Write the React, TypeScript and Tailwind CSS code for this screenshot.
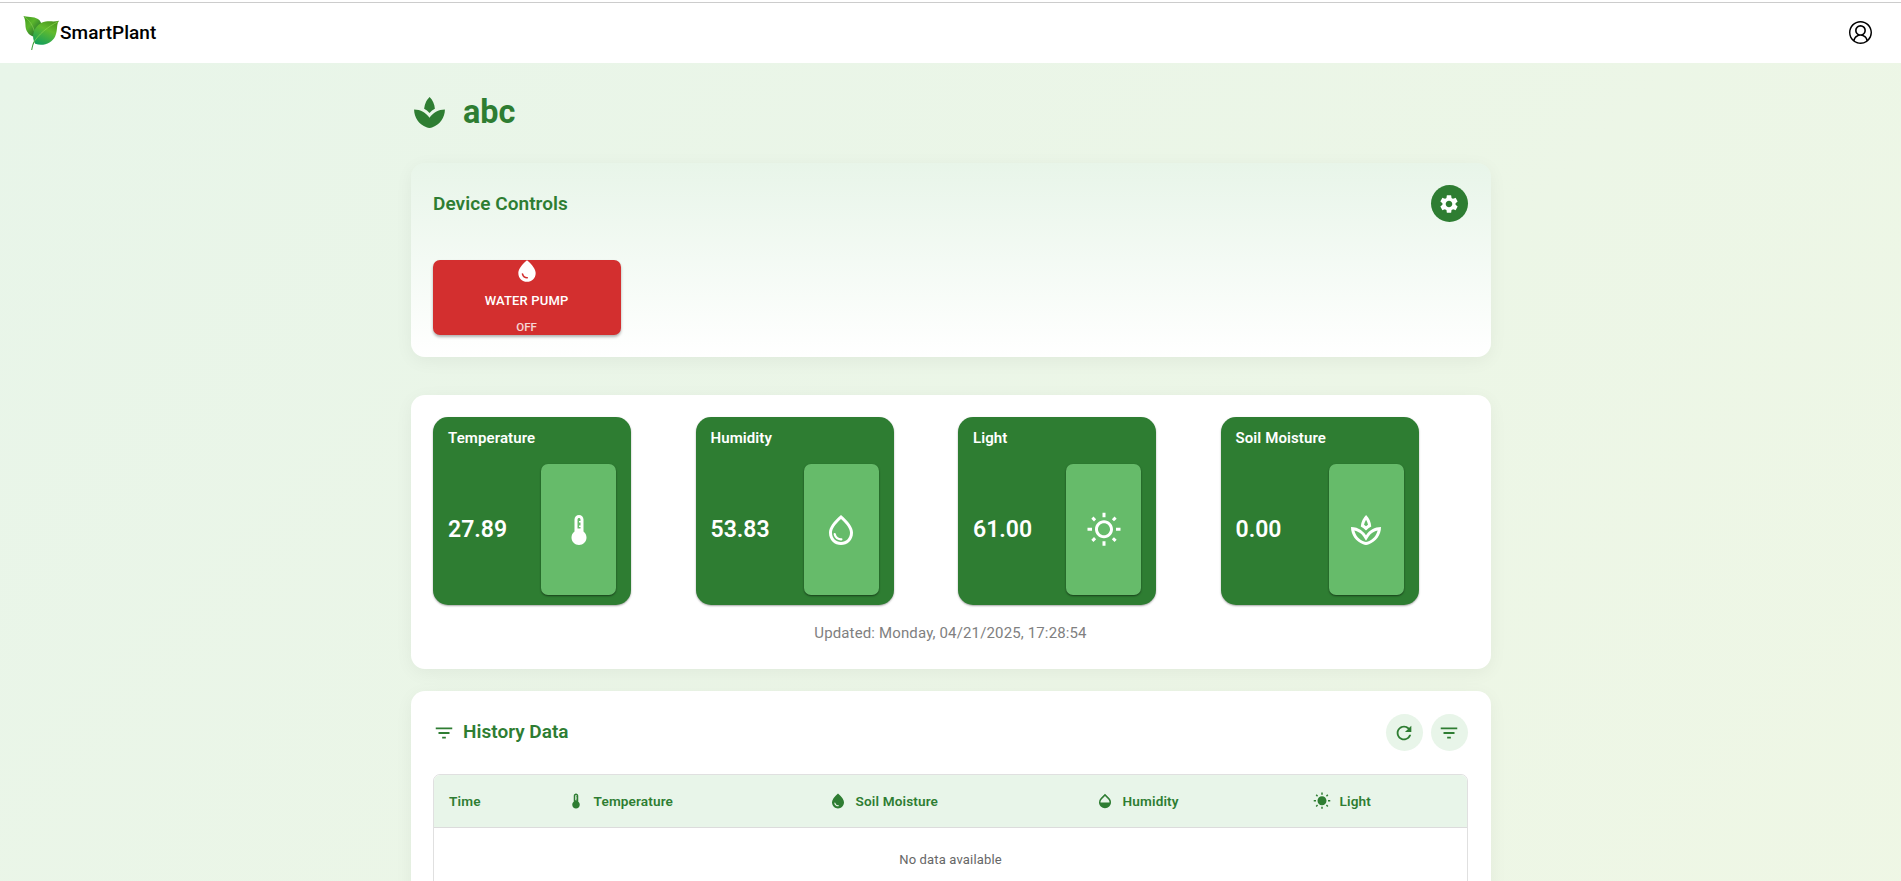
import React from "react";
import type { IconType } from "react-icons";
import {
  MdFilterList,
  MdOpacity,
  MdOutlineSpa,
  MdOutlineWaterDrop,
  MdOutlineWbSunny,
  MdRefresh,
  MdSettings,
  MdSpa,
  MdThermostat,
  MdWaterDrop,
  MdWbSunny,
} from "react-icons/md";
import { VscAccount } from "react-icons/vsc";

const sensors: { label: string; value: string; icon: IconType }[] = [
  { label: "Temperature", value: "27.89", icon: MdThermostat },
  { label: "Humidity", value: "53.83", icon: MdOutlineWaterDrop },
  { label: "Light", value: "61.00", icon: MdOutlineWbSunny },
  { label: "Soil Moisture", value: "0.00", icon: MdOutlineSpa },
];

const columns: { label: string; width: string; icon?: IconType }[] = [
  { label: "Time", width: "w-[118px]" },
  { label: "Temperature", width: "w-[262px]", icon: MdThermostat },
  { label: "Soil Moisture", width: "w-[267px]", icon: MdWaterDrop },
  { label: "Humidity", width: "w-[217px]", icon: MdOpacity },
  { label: "Light", width: "", icon: MdWbSunny },
];

function Logo() {
  return (
    <svg viewBox="0 0 38 36" className="h-[36px] w-[37px]">
      <defs>
        <linearGradient id="leafBack" x1="0" y1="0" x2="1" y2="1">
          <stop offset="0" stopColor="#3f9a1c" />
          <stop offset="0.4" stopColor="#5bb52c" />
          <stop offset="0.75" stopColor="#2a7a2c" />
          <stop offset="1" stopColor="#1d6a34" />
        </linearGradient>
        <linearGradient id="leafFront" x1="0.8" y1="0" x2="0.3" y2="1">
          <stop offset="0" stopColor="#4a941c" />
          <stop offset="0.4" stopColor="#62bb2e" />
          <stop offset="1" stopColor="#17a05a" />
        </linearGradient>
      </defs>
      <path d="M.5.5C7 2 13 .8 17 5c3 3.4 3 10-.5 14.500l-5 2.500C5 20 2.500 15 2.500 9.500 2.400 6 2 3 .5.5Z" fill="url(#leafBack)" />
      <path d="M1 1C7 5 11 11 12.500 20" stroke="#8fd25a" strokeWidth=".6" fill="none" />
      <path d="M37 5.500C34 9 36 15 33 21.500c-3 6.500-12 10.500-20.500 7.500C8 21.500 11 11.500 19 7.500 25 4.800 31 7 37 5.500Z" fill="url(#leafFront)" />
      <path d="M36 6.500C26 11 15 20 10.500 28.500" stroke="#8ad650" strokeWidth=".7" fill="none" />
      <path d="M11.500 27C9.500 30.500 9.500 33 9 35" stroke="#3f9e3a" strokeWidth="1.100" fill="none" strokeLinecap="round" />
    </svg>
  );
}

function Card({ className, children }: { className: string; children: React.ReactNode }) {
  return (
    <section className={`rounded-[14px] pr-[23px] pl-[22px] shadow-[0_4px_18px_rgba(0,0,0,0.05)] ${className}`}>{children}</section>
  );
}

export default function App() {
  return (
    <div className="flex h-[881px] flex-col overflow-hidden bg-white font-['Roboto',sans-serif]">
      <header className="mt-[2px] flex h-[61px] shrink-0 items-center justify-between border-t border-[#cccccc] pr-[29.5px] pl-[23px]">
        <div className="flex items-center">
          <Logo />
          <span className="text-[19px] leading-6 font-medium tracking-[0.04px] text-black">SmartPlant</span>
        </div>
        <VscAccount className="mb-px size-[23px] text-black" />
      </header>

      <main className="flex grow flex-col items-center bg-linear-[135deg,#e8f5e9_0%,#f0f7e4_115%]">
        <div className="w-[1080px]">
          <h1 className="mt-[28px] flex h-[42px] items-center gap-[15.5px] text-[32.4px] leading-[42px] font-bold text-[#2e7d32]">
            <MdSpa className="size-[37px]" />
            abc
          </h1>

          <Card className="mt-[30px] h-[194px] bg-linear-to-b from-[#e8f5e9] to-white pt-[22px]">
            <div className="flex h-[37px] items-center justify-between">
              <h2 className="pt-[2px] pl-[0.5px] text-[19px] font-semibold tracking-[0.06px] text-[#2e7d32]">Device Controls</h2>
              <button className="flex size-[37px] items-center justify-center rounded-full bg-[#2e7d32] text-white">
                <MdSettings className="size-[22px]" />
              </button>
            </div>
            <button className="mt-[38px] flex h-[75px] w-[188px] flex-col items-center overflow-hidden rounded-[7px] bg-[#d32f2f] text-white shadow-[0_2px_3px_rgba(0,0,0,0.3)]">
              <MdWaterDrop className="-mt-[2px] size-[26px] shrink-0" />
              <span className="mt-[5px] text-[13px] leading-[23px] font-medium tracking-[0.16px]">WATER PUMP</span>
              <span className="mt-[5px] text-[11.5px] leading-[20px] font-medium opacity-80">OFF</span>
            </button>
          </Card>

          <Card className="mt-[38px] h-[274px] bg-white pt-[22px]">
            <div className="flex gap-[64.5px] pl-[0.5px]">
              {sensors.map(({ label, value, icon: Icon }) => (
                <div
                  key={label}
                  className="flex h-[188px] w-[198px] flex-col rounded-[15px] bg-[#2e7d32] px-[15px] pt-[10px] text-white shadow-[0_1px_2px_rgba(0,0,0,0.35)]"
                >
                  <h3 className="text-[15px] leading-[22px] font-semibold tracking-[0.1px]">{label}</h3>
                  <div className="mt-[15px] flex h-[131px] items-center justify-between">
                    <span className="pt-[2px] text-[23px] font-semibold">{value}</span>
                    <div className="flex h-full w-[75px] items-center justify-center rounded-[7px] bg-[#66bb6a] shadow-[0_1px_2px_rgba(0,0,0,0.5)]">
                      <Icon className="size-[36px]" />
                    </div>
                  </div>
                </div>
              ))}
            </div>
            <p className="mt-[16px] pl-px text-center text-[15px] leading-[24px] tracking-[0.14px] text-[#808080]">
              Updated: Monday, 04/21/2025, 17:28:54
            </p>
          </Card>

          <Card className="mt-[22px] h-[400px] bg-white pt-[23px]">
            <div className="flex h-[37px] items-center justify-between text-[#2e7d32]">
              <h2 className="flex items-center gap-[8.6px] text-[19px] font-semibold">
                <MdFilterList className="size-[22px]" />
                History Data
              </h2>
              <div className="flex gap-[8px]">
                <button className="flex size-[37px] items-center justify-center rounded-full bg-[#e8f5e9]">
                  <MdRefresh className="size-[22px]" />
                </button>
                <button className="flex size-[37px] items-center justify-center rounded-full bg-[#e8f5e9]">
                  <MdFilterList className="size-[22px]" />
                </button>
              </div>
            </div>
            <div className="mt-[23px] h-[300px] overflow-hidden rounded-[7px] border border-[#e0e0e0]">
              <table className="w-full table-fixed border-collapse">
                <thead>
                  <tr className="h-[52px] border-b border-[#dcdcdc] bg-[#e8f5e9]">
                    {columns.map(({ label, width, icon: Icon }) => (
                      <th key={label} className={`pl-[15.6px] text-[#2e7d32] ${width}`}>
                        <span className="flex items-center gap-[8.5px] text-[13.6px] leading-5 font-semibold tracking-[0.13px]">
                          {Icon && <Icon className="size-[18px]" />}
                          {label}
                        </span>
                      </th>
                    ))}
                  </tr>
                </thead>
                <tbody>
                  <tr>
                    <td colSpan={5} className="h-[64px] pl-px text-center text-[13px] tracking-[0.16px] text-[#666666]">
                      No data available
                    </td>
                  </tr>
                </tbody>
              </table>
            </div>
          </Card>
        </div>
      </main>
    </div>
  );
}
